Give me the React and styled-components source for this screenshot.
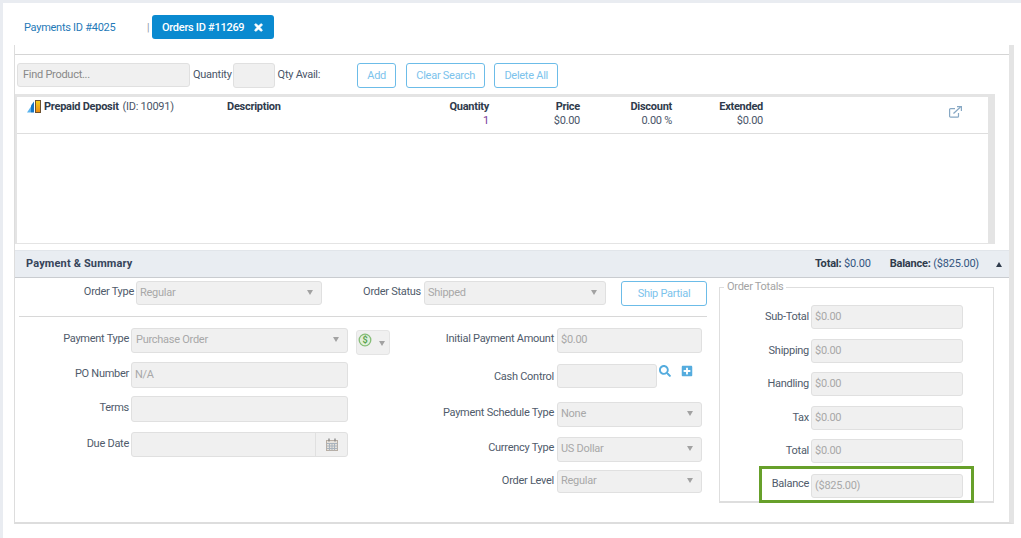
import React from "react";
import styled, { createGlobalStyle } from "styled-components";
import { FaTimes, FaSearch, FaPlusSquare } from "react-icons/fa";

const GlobalStyle = createGlobalStyle`
  html, body {
    margin: 0;
    padding: 0;
    background: #e9ecf1;
    font-family: Roboto, "Liberation Sans", sans-serif;
    font-size: 11px;
    letter-spacing: -0.27px;
    color: #4a5568;
    overflow: hidden;
  }
`;

const Card = styled.div`
  margin: 3px 0 0 3px;
  height: 535px;
  background: #fff;
  box-sizing: border-box;
  padding: 12px 0 0 11px;
  display: flex;
  flex-direction: column;
`;

const TabBar = styled.div`
  display: flex;
  align-items: center;
  height: 24px;
  padding-left: 10px;
  margin-bottom: 6px;
`;

const TabLink = styled.a`
  color: #1f7ab8;
  font-size: 11px;
  width: 123px;
`;

const TabDivider = styled.span`
  width: 5px;
  color: #8a94a0;
  font-size: 10px;
`;

const ActiveTab = styled.div`
  display: flex;
  align-items: center;
  justify-content: space-between;
  box-sizing: border-box;
  width: 122px;
  height: 24px;
  padding: 0 10px;
  background: #0a8ad0;
  border-radius: 3px;
  color: #fff;
  font-weight: 500;
  font-size: 11px;
`;

const CloseIcon = styled(FaTimes)`
  stroke: currentColor;
  stroke-width: 40;
`;

const Workspace = styled.div`
  width: 1000px;
  height: 479px;
  box-sizing: border-box;
  border-left: 1px solid #ddd;
  border-right: 5px solid #e4e4e4;
  border-bottom: 2px solid #ddd;
  display: flex;
  flex-direction: column;
`;

const Toolbar = styled.div`
  margin-top: 9px;
  border-top: 1px solid #d5d5d5;
  padding: 8px 0 6px 2px;
  display: flex;
  align-items: flex-start;
  height: 25px;
`;

const Field = styled.div`
  box-sizing: border-box;
  display: flex;
  align-items: center;
  flex: none;
  width: ${p => p.$w}px;
  height: ${p => p.$h || 25}px;
  padding: 0 0 2px ${p => (p.$pad === undefined ? 3 : p.$pad)}px;
  background: #f0f0f0;
  border: 1px solid #e0e0e0;
  border-radius: 3px;
  color: ${p => (p.$dark ? "#888" : "#a8a8a8")};
  font-size: 11px;
`;

const ToolbarLabel = styled.span`
  margin: 5px 1px 0 3px;
  color: #4a5568;
  font-size: 11px;
`;

const OutlineButton = styled.button`
  box-sizing: border-box;
  flex: none;
  width: ${p => p.$w}px;
  height: 25px;
  margin-left: ${p => p.$ml || 0}px;
  padding: 0;
  background: #fff;
  border: 1px solid #6cbce8;
  border-radius: 3px;
  color: #7cc3ec;
  font-family: inherit;
  font-size: 11px;
  letter-spacing: inherit;
`;

const ProductBox = styled.div`
  box-sizing: border-box;
  width: 980px;
  height: 150px;
  border: solid #e4e4e4;
  border-width: 3px 7px 1px 2px;
`;

const ProductRow = styled.div`
  display: grid;
  grid-template-columns: 200px 110px 152px 91px 92px 91px 1fr;
  height: 37px;
  box-sizing: border-box;
  border-bottom: 1px solid #dedede;
  padding: 3px 0 0 10px;
  line-height: 13px;
`;

const ProductCell = styled.div`
  text-align: ${p => (p.$right ? "right" : "left")};
  color: #4a5568;
`;

const ProductName = styled.div`
  display: flex;
  align-items: center;
  gap: 3px;
  height: 13px;
  white-space: nowrap;
`;

const ProductId = styled.span`
  margin-left: 1px;
`;

const Head = styled.div`
  color: #2f3b4c;
  font-weight: 700;
`;

const Sub = styled.div`
  margin-top: 1px;
  color: ${p => (p.$purple ? "#7a3d99" : "#4a5568")};
`;

const LinkIcon = styled.svg`
  display: block;
  margin: 6px 0 0 186px;
  color: #87a8c4;
`;

const SummaryBar = styled.div`
  box-sizing: border-box;
  display: flex;
  align-items: center;
  height: 28px;
  margin-top: 6px;
  padding: 0 7px 2px 11px;
  background: #e9edf2;
  border-top: 1px solid #e1e5ea;
  border-bottom: 1px solid #c9ccd0;
`;

const SummaryTitle = styled.strong`
  flex: 1;
  color: #36445a;
  font-weight: 700;
  font-size: 11px;
  letter-spacing: 0.15px;
`;

const SummaryStat = styled.span`
  margin-left: ${p => p.$ml}px;
  color: #34557e;
  letter-spacing: -0.2px;
  b { color: #2f3b4c; font-weight: 700; }
`;

const Collapse = styled.span`
  margin: 2px 0 0 17px;
  border-left: 3.5px solid transparent;
  border-right: 3.5px solid transparent;
  border-bottom: 5px solid #2f3b4c;
`;

const Body = styled.div`
  display: flex;
  padding-left: 4px;
`;

const FormColumn = styled.div`
  width: 688px;
  flex: none;
`;

const TopRow = styled.div`
  display: flex;
  align-items: flex-start;
  padding-top: 3px;
  height: 39px;
  box-sizing: border-box;
  border-bottom: 1px solid #d8d8d8;
`;

const FormGrid = styled.div`
  display: grid;
  grid-template-columns: 371px 1fr;
  padding-top: 11px;
`;

const FormRow = styled.div`
  display: flex;
  align-items: flex-start;
  height: ${p => p.$h}px;
`;

const Label = styled.label`
  flex: none;
  box-sizing: border-box;
  width: ${p => p.$w}px;
  padding-right: ${p => p.$pr || 2}px;
  padding-top: ${p => (p.$top === undefined ? 4 : p.$top)}px;
  text-align: right;
  color: #4f5b6b;
  font-size: 11px;
  white-space: nowrap;
`;

const Caret = styled.span`
  flex: none;
  margin-left: auto;
  margin-right: ${p => p.$mr || 8}px;
  border-left: 3.5px solid transparent;
  border-right: 3.5px solid transparent;
  border-top: 5px solid #a2a2a2;
`;

const CurrencyBox = styled.div`
  box-sizing: border-box;
  display: flex;
  align-items: flex-start;
  width: 34px;
  height: 25px;
  margin: 2px 0 0 8px;
  padding: 2px 0 0 1px;
  background: #f0f0f0;
  border: 1px solid #e4e4e4;
  border-radius: 3px;
`;

const CurrencyCaret = styled(Caret)`
  margin-top: 8px;
  margin-right: 4px;
`;

const DateAddon = styled.span`
  box-sizing: border-box;
  display: flex;
  align-items: center;
  justify-content: center;
  width: 32px;
  align-self: stretch;
  margin: 0 0 -2px auto;
  border-left: 1px solid #e0e0e0;
`;

const LookupIcons = styled.div`
  display: flex;
  align-items: flex-start;
  gap: 10px;
  margin-left: 2px;
  padding-top: 1px;
  color: #55acde;
  font-size: 12px;
`;

const Totals = styled.fieldset`
  box-sizing: border-box;
  width: 275px;
  height: 220px;
  margin: 5px 0 0 12px;
  padding: 14px 0 0 0;
  border: 1px solid #dedede;
  border-bottom-width: 2px;
  min-inline-size: 0;
`;

const TotalsLegend = styled.legend`
  margin-left: 4px;
  padding: 0 3px;
  color: #a3a3a3;
  font-size: 11px;
  line-height: 8px;
`;

const TotalRow = styled.div`
  display: flex;
  align-items: flex-start;
  height: 34px;

  &:nth-of-type(even) {
    height: 33px;
  }
`;

const BalanceRow = styled.div`
  box-sizing: border-box;
  display: flex;
  align-items: flex-start;
  width: 215px;
  height: 37px;
  margin: -7px 0 0 39px;
  padding-top: 5px;
  border: 3px solid #67a02a;
`;

const ProductGlyph = () => (
  <svg width="14" height="13" viewBox="0 0 14 13">
    <defs>
      <linearGradient id="barFill" x1="0" y1="0" x2="0" y2="1">
        <stop offset="0" stopColor="#f7d21e" />
        <stop offset="1" stopColor="#ee8a12" />
      </linearGradient>
    </defs>
    <path d="M0 12.5 4 6.5V12.5Z" fill="#5ab4ee" />
    <path d="M4 12.5V5.5L7 1.5V12.5Z" fill="#1577c9" />
    <rect x="8.5" y="0.5" width="5" height="12" fill="url(#barFill)" stroke="#6d5130" strokeWidth="1" />
  </svg>
);

const DollarGlyph = () => (
  <svg width="14" height="14" viewBox="0 0 14 14">
    <circle cx="7" cy="7" r="5.8" fill="#e3efdc" stroke="#86bd78" strokeWidth="1.3" />
    <text x="7" y="10.2" textAnchor="middle" fontSize="9" fontWeight="700" fill="#5aa34f" fontFamily="Roboto, sans-serif">$</text>
  </svg>
);

const CalendarGlyph = () => (
  <svg width="12" height="13" viewBox="0 0 12 13" fill="none">
    <rect x="0.5" y="2.5" width="11" height="10" fill="#e6e2dc" stroke="#b8aea4" />
    <path d="M.5 5.5h11M.5 8h11M.5 10.5h11M3.5 5.5v7M6 5.5v7M8.5 5.5v7" stroke="#a9b3bd" />
    <path d="M3 .5v3M9 .5v3" stroke="#8a8a8a" strokeWidth="1.4" />
  </svg>
);

const App = () => (
  <>
    <GlobalStyle />
    <Card>
      <TabBar>
        <TabLink>Payments ID #4025</TabLink>
        <TabDivider>|</TabDivider>
        <ActiveTab>
          Orders ID #11269
          <CloseIcon size={11} />
        </ActiveTab>
      </TabBar>
      <Workspace>
        <Toolbar>
          <Field $w={173} $h={24} $pad={5} $dark>Find Product...</Field>
          <ToolbarLabel>Quantity</ToolbarLabel>
          <Field $w={42} />
          <ToolbarLabel>Qty Avail:</ToolbarLabel>
          <OutlineButton $w={39} $ml={36}>Add</OutlineButton>
          <OutlineButton $w={79} $ml={10}>Clear Search</OutlineButton>
          <OutlineButton $w={64} $ml={9}>Delete All</OutlineButton>
        </Toolbar>
        <ProductBox>
          <ProductRow>
            <ProductCell>
              <ProductName>
                <ProductGlyph />
                <Head>Prepaid Deposit</Head>
                <ProductId>(ID: 10091)</ProductId>
              </ProductName>
            </ProductCell>
            <ProductCell><Head>Description</Head></ProductCell>
            <ProductCell $right><Head>Quantity</Head><Sub $purple>1</Sub></ProductCell>
            <ProductCell $right><Head>Price</Head><Sub>$0.00</Sub></ProductCell>
            <ProductCell $right><Head>Discount</Head><Sub>0.00 %</Sub></ProductCell>
            <ProductCell $right><Head>Extended</Head><Sub>$0.00</Sub></ProductCell>
            <ProductCell>
              <LinkIcon width="13" height="12" viewBox="0 0 13 12" fill="none" stroke="currentColor" strokeWidth="1.2">
                <path d="M9.5 7v3.2a1 1 0 0 1-1 1H1.6a1 1 0 0 1-1-1V3.6a1 1 0 0 1 1-1H6" />
                <path d="M4.5 7.5 11.5 1" />
                <path d="M8 .6h4.4V5" />
              </LinkIcon>
            </ProductCell>
          </ProductRow>
        </ProductBox>
        <SummaryBar>
          <SummaryTitle>Payment &amp; Summary</SummaryTitle>
          <SummaryStat $ml={0}><b>Total:</b> $0.00</SummaryStat>
          <SummaryStat $ml={19}><b>Balance:</b> ($825.00)</SummaryStat>
          <Collapse />
        </SummaryBar>
        <Body>
          <FormColumn>
            <TopRow>
              <Label $w={117} $top={4}>Order Type</Label>
              <Field $w={186} $h={24}>Regular<Caret /></Field>
              <Label $w={102} $top={4} $pr={3}>Order Status</Label>
              <Field $w={182} $h={24}>Shipped<Caret /></Field>
              <OutlineButton $w={86} $ml={15}>Ship Partial</OutlineButton>
            </TopRow>
            <FormGrid>
              <div>
                <FormRow $h={34}>
                  <Label $w={112}>Payment Type</Label>
                  <Field $w={217} $pad={4}>Purchase Order<Caret /></Field>
                  <CurrencyBox><DollarGlyph /><CurrencyCaret /></CurrencyBox>
                </FormRow>
                <FormRow $h={34}>
                  <Label $w={112} $top={5}>PO Number</Label>
                  <Field $w={217} $h={26}>N/A</Field>
                </FormRow>
                <FormRow $h={36}>
                  <Label $w={112} $top={5}>Terms</Label>
                  <Field $w={217} $h={26} />
                </FormRow>
                <FormRow $h={25}>
                  <Label $w={112} $top={5}>Due Date</Label>
                  <Field $w={217}>
                    <DateAddon><CalendarGlyph /></DateAddon>
                  </Field>
                </FormRow>
              </div>
              <div>
                <FormRow $h={36}>
                  <Label $w={167} $pr={3}>Initial Payment Amount</Label>
                  <Field $w={145}>$0.00</Field>
                </FormRow>
                <FormRow $h={38}>
                  <Label $w={167} $top={6} $pr={3}>Cash Control</Label>
                  <Field $w={100} $h={24} />
                  <LookupIcons><FaSearch /><FaPlusSquare /></LookupIcons>
                </FormRow>
                <FormRow $h={35}>
                  <Label $w={167} $pr={3}>Payment Schedule Type</Label>
                  <Field $w={145}>None<Caret /></Field>
                </FormRow>
                <FormRow $h={33}>
                  <Label $w={167} $pr={3}>Currency Type</Label>
                  <Field $w={145}>US Dollar<Caret /></Field>
                </FormRow>
                <FormRow $h={24}>
                  <Label $w={167} $pr={3}>Order Level</Label>
                  <Field $w={145} $h={23}>Regular<Caret /></Field>
                </FormRow>
              </div>
            </FormGrid>
          </FormColumn>
          <Totals>
            <TotalsLegend>Order Totals</TotalsLegend>
            {[
              ["Sub-Total", "$0.00"],
              ["Shipping", "$0.00"],
              ["Handling", "$0.00"],
              ["Tax", "$0.00"],
              ["Total", "$0.00"],
            ].map(([name, value]) => (
              <TotalRow key={name}>
                <Label $w={91} $top={5}>{name}</Label>
                <Field $w={152} $h={24}>{value}</Field>
              </TotalRow>
            ))}
            <BalanceRow>
              <Label $w={49} $top={3}>Balance</Label>
              <Field $w={152} $h={24}>($825.00)</Field>
            </BalanceRow>
          </Totals>
        </Body>
      </Workspace>
    </Card>
  </>
);

export default App;
